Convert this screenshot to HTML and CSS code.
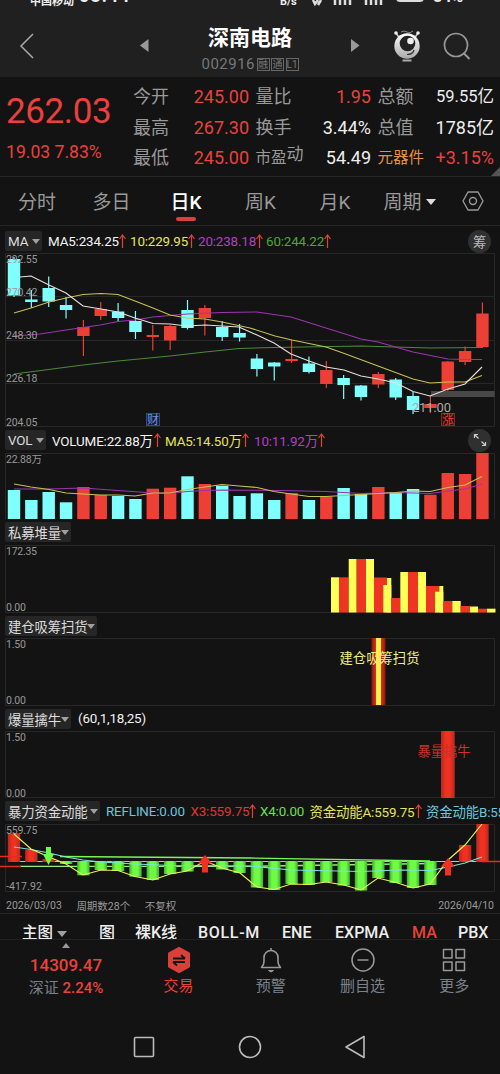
FILE: index.html
```
<!DOCTYPE html>
<html lang="zh-CN">
<head>
    <meta charset="UTF-8">
    <meta name="viewport" content="width=device-width, initial-scale=1.0">
    <title>深南电路 002916</title>
    <link rel="stylesheet" href="styles.css">
</head>
<body>

    <!-- Header -->
    <header class="header">
        <div class="status">
            <span class="carrier">中国移动</span>
            <span class="clock">08:44</span>
            <span class="net">B/s</span>
            <svg class="signals" width="80" height="8" viewBox="0 0 80 8">
                <path d="M5 0l2 4 3-4M13 0l-3 5M27 0v5M32 0v5M37 0v5M42 0v5M58 0v5M63 0v5M68 0v5M73 0v5" fill="none" stroke="#ddd" stroke-width="2.5"/>
            </svg>
            <span class="battery"></span>
            <span class="percent">84%</span>
        </div>
        <div class="title-bar">
            <svg class="back" width="16" height="28" viewBox="0 0 16 28"><path d="M14 2L2 14l12 12" fill="none" stroke="#aaa" stroke-width="1.5"/></svg>
            <svg class="prev" width="9" height="13" viewBox="0 0 9 13"><path d="M0 6.500L8.500 0v13z" fill="#999"/></svg>
            <div class="stock">
                <h1>深南电路</h1>
                <div class="code">002916<i>融</i><i>通</i><i>L1</i></div>
            </div>
            <svg class="next" width="9" height="13" viewBox="0 0 9 13"><path d="M8.500 6.500L0 0v13z" fill="#999"/></svg>
            <svg class="robot" width="28" height="34" viewBox="0 0 28 34">
                <defs>
                    <linearGradient id="ball" x1="0" y1="0" x2="0" y2="1"><stop offset="0" stop-color="#fff"/><stop offset="1" stop-color="#aaa"/></linearGradient>
                </defs>
                <path d="M3 4l4 6M25 4l-4 6" stroke="#ccc" stroke-width="1.500"/>
                <path d="M8 3q3-2 6 0t6-1" stroke="#888" fill="none"/>
                <circle cx="3" cy="4" r="1.800" fill="#eee"/><circle cx="25" cy="4" r="1.800" fill="#eee"/>
                <circle cx="14" cy="17" r="12.700" fill="url(#ball)"/>
                <circle cx="14.500" cy="14.500" r="7.800" fill="#222"/>
                <circle cx="17.500" cy="12" r="3.300" fill="#eee"/>
                <path d="M14 25.500q6 0 7-4.500" stroke="#333" fill="none" stroke-width="1.200"/>
                <path d="M9.500 31.500h9" stroke="#aaa" stroke-width="2"/>
            </svg>
            <svg class="search" width="28" height="28" viewBox="0 0 28 28"><circle cx="13" cy="13" r="11.500" fill="none" stroke="#999" stroke-width="1.700"/><path d="M20.500 21l6 6" stroke="#999" stroke-width="2"/></svg>
        </div>
    </header>

    <!-- Quote -->
    <section class="quote">
        <div class="now">
            <div class="price">262.03</div>
            <div class="change">19.03 7.83%</div>
        </div>
        <div class="stats">
            <span>今开</span><b class="red">245.00</b><span>量比</span><b class="red">1.95</b><span>总额</span><b class="amount">59.55亿</b>
            <span>最高</span><b class="red">267.30</b><span>换手</span><b>3.44%</b><span>总值</span><b>1785亿</b>
            <span>最低</span><b class="red">245.00</b><span class="pe">市盈<sup>动</sup></span><b>54.49</b><span class="sector">元器件</span><b class="red">+3.15%</b>
        </div>
        <svg class="corner" width="9" height="9" viewBox="0 0 9 9"><path d="M9 0v9H0z" fill="#555"/></svg>
    </section>

    <!-- Period tabs -->
    <nav class="tabs">
        <span>分时</span>
        <span>多日</span>
        <span class="active">日K</span>
        <span>周K</span>
        <span>月K</span>
        <span class="period">周期<i class="caret"></i></span>
        <svg width="22" height="20" viewBox="0 0 22 20"><path d="M6 1h10l5 9-5 9H6L1 10z" fill="none" stroke="#999" stroke-width="1.400" stroke-linejoin="round"/><circle cx="11" cy="10" r="3.500" fill="none" stroke="#999" stroke-width="1.400"/></svg>
    </nav>

    <!-- Arrow shared by the legends -->
    <svg class="symbols" width="0" height="0">
        <symbol id="arrow" viewBox="0 0 7 14"><path d="M3.500 14V1.500M.5 5l3-4 3 4" fill="none" stroke="#dd4438" stroke-width="1.200"/></symbol>
    </svg>

    <!-- Main chart -->
    <div class="legend ma-legend">
        <span class="tag">MA<i class="caret"></i></span>
        <span class="white">MA5:234.25<svg class="arrow"><use href="#arrow"/></svg></span>
        <span class="yellow">10:229.95<svg class="arrow"><use href="#arrow"/></svg></span>
        <span class="purple">20:238.18<svg class="arrow"><use href="#arrow"/></svg></span>
        <span class="green">60:244.22<svg class="arrow"><use href="#arrow"/></svg></span>
        <span class="round">筹</span>
    </div>
    <svg class="chart" width="500" height="174" viewBox="0 253 500 174">
        <path class="grid" d="M5.500 253.500h489v173H5.500zM5.500 296.500h489M5.500 340.500h489M5.500 383.500h489"/>
        <rect x="431" y="391" width="63.500" height="6" fill="#484848"/>
        <g id="candles"></g>
        <path class="line green-line" d="M14 374L83 365L118 361L170 356L205 352L239 348.500L274 347.500L361 346L430 348L482 347.500"/>
        <path class="line purple-line" d="M14 336L40 334L66 330L100 325L118 321.500L135 320L153 317L187 314L222 312.500L257 312L291 317L326 328L361 339L378 342L413 352L448 359L465 359.500H482"/>
        <path class="line yellow-line" d="M14 313L31 308L49 302L66 298L83 294.500L101 293.500L118 294.500L135 301L153 308L170 315L187 318L205 319L222 322L250 328L275 336L292 340L326 347L343 353L378 366L413 379L430 383L448 382L465 382L482 375.500"/>
        <path class="line white-line" d="M20 277L31 276L49 285L66 293L83 306L101 309L118 312L135 318L153 323.500L170 324L187 326L205 325L239 327L257 335L274 343L291 354L309 361L326 367L344 370L361 376L378 379L396 383L413 391.500L430 396L448 389L465 384L482 367"/>
        <text x="6" y="262.500" textLength="31.500">292.55</text>
        <text x="6" y="295.500" textLength="31.500">270.42</text>
        <text x="6" y="339" textLength="31.500">248.30</text>
        <text x="6" y="382" textLength="31.500">226.18</text>
        <text x="6" y="425.500" textLength="31.500">204.05</text>
        <text class="low" x="412" y="411.500" textLength="39">211.00</text>
        <rect class="mark blue" x="146.500" y="413.500" width="13" height="12"/>
        <text class="mark-text blue" x="147" y="424">财</text>
        <rect class="mark crimson" x="441.500" y="413.500" width="13" height="12"/>
        <text class="mark-text crimson" x="442" y="424">涨</text>
    </svg>

    <!-- Volume -->
    <div class="legend vol-legend">
        <span class="tag">VOL<i class="caret"></i></span>
        <span class="white">VOLUME:22.88万<svg class="arrow"><use href="#arrow"/></svg></span>
        <span class="yellow">MA5:14.50万<svg class="arrow"><use href="#arrow"/></svg></span>
        <span class="purple">10:11.92万<svg class="arrow"><use href="#arrow"/></svg></span>
        <span class="round"><svg width="14" height="14" viewBox="0 0 14 14"><path d="M5.500 5.500L1.500 1.500M1.500 5V1.500H5M8.500 8.500l4 4M12.500 9v3.500H9" fill="none" stroke="#ccc" stroke-width="1.200"/></svg></span>
    </div>
    <svg class="chart" width="500" height="66" viewBox="0 453 500 66">
        <path class="grid" d="M5.500 453.500h489v66H5.500z"/>
        <g id="volumes"></g>
        <path class="line purple-line" d="M14 489L49 489L83 488L118 490.500L153 493L170 493.500L187 491.500L205 490.500L222 490L280 490.500L326 491.500L361 493.500L396 492.500L430 493.500L448 491L465 489L482 484"/>
        <path class="line yellow-line" d="M14 484L31 487L49 489.500L66 493L83 494L101 495L118 495L135 496L153 493L170 493L187 489.500L205 487L222 484.500L239 486L257 487.500L274 491.500L291 494L309 496.500L326 496.500L361 494.500L396 492.500L413 491L430 491.500L448 487.500L465 485L482 476.500"/>
        <text x="6" y="462.500" textLength="36">22.88万</text>
    </svg>

    <!-- Private fund volume -->
    <div class="legend">
        <span class="tag">私募堆量<i class="caret"></i></span>
    </div>
    <svg class="chart" width="500" height="68" viewBox="0 545 500 68">
        <path class="grid" d="M5.500 545.500h489v67H5.500z"/>
        <g id="heap"></g>
        <text x="6" y="555" textLength="31">172.35</text>
        <text x="6" y="611" textLength="20">0.00</text>
    </svg>

    <!-- Accumulation signal -->
    <div class="legend short">
        <span class="tag">建仓吸筹扫货<i class="caret"></i></span>
    </div>
    <svg class="chart" width="500" height="68" viewBox="0 638 500 68">
        <defs>
            <linearGradient id="edge"><stop offset="0" stop-color="#8a1710"/><stop offset=".3" stop-color="#d0331c"/><stop offset=".7" stop-color="#d0331c"/><stop offset="1" stop-color="#8a1710"/></linearGradient>
            <linearGradient id="redbar"><stop offset="0" stop-color="#b42a22"/><stop offset=".35" stop-color="#f03020"/><stop offset=".65" stop-color="#f03020"/><stop offset="1" stop-color="#b42a22"/></linearGradient>
            <linearGradient id="greenbar"><stop offset="0" stop-color="#3fae2e"/><stop offset=".3" stop-color="#6dfb43"/><stop offset=".7" stop-color="#6dfb43"/><stop offset="1" stop-color="#3fae2e"/></linearGradient>
        </defs>
        <path class="grid" d="M5.500 638.500h489v67H5.500z"/>
        <rect x="371.500" y="638" width="14" height="67" fill="url(#edge)"/>
        <rect x="376" y="638" width="5" height="67" fill="#ffee4a"/>
        <text x="6" y="648" textLength="20">1.50</text>
        <text x="6" y="704" textLength="20">0.00</text>
        <text class="signal gather" x="339.500" y="663" textLength="80">建仓吸筹扫货</text>
    </svg>

    <!-- Burst signal -->
    <div class="legend short">
        <span class="tag">爆量擒牛<i class="caret"></i></span>
        <span class="white params">(60,1,18,25)</span>
    </div>
    <svg class="chart" width="500" height="67" viewBox="0 731 500 67">
        <path class="grid" d="M5.500 731.500h489v66H5.500z"/>
        <rect x="441" y="731" width="13.700" height="67" fill="url(#redbar)"/>
        <text class="signal burst" x="417.500" y="756" textLength="53">暴量擒牛</text>
        <text x="6" y="741" textLength="20">1.50</text>
        <text x="6" y="797" textLength="20">0.00</text>
    </svg>

    <!-- Capital momentum -->
    <div class="legend flow-legend">
        <span class="tag">暴力资金动能<i class="caret"></i></span>
        <span class="cyan">REFLINE:0.00</span>
        <span class="bright-red">X3:559.75<svg class="arrow"><use href="#arrow"/></svg></span>
        <span class="lime">X4:0.00</span>
        <span class="yellow">资金动能A:559.75<svg class="arrow"><use href="#arrow"/></svg></span>
        <span class="cyan">资金动能B:559.75</span>
    </div>
    <svg class="chart" width="500" height="68" viewBox="0 824 500 68">
        <path class="grid" d="M5.500 824.500h489v67H5.500z"/>
        <path d="M14 861.500H482" stroke="#c8b8d0" stroke-width="1.200"/>
        <path d="M20 866.300H250L430 863.500" stroke="#9be87c" stroke-width="1.300" fill="none"/>
        <g id="momentum"></g>
        <path d="M0 856.500H22M0 866.500H21M482 861.500H500" stroke="#e32a20" stroke-width="1.500"/>
        <path d="M60 856.500L250 858L430 861" stroke="#7bf557" stroke-width="1.300" fill="none"/>
        <path class="line" stroke="#79e4dc" d="M14 847L31 849.500L49 853L66 857L83 860L101 862L135 864L170 865.500L250 866L291 870L361 871.500L400 870L430 870.500L448 867L465 863L482 857"/>
        <path class="line" stroke="#f2f35a" d="M14 834L31 849L49 857L66 864L83 875L101 870L118 870.500L135 876.500L153 880L170 874L187 871L205 861L222 868L240 873L257 887L274 889.500L291 884L309 884.500L326 882L344 885L361 890L378 878L396 882.500L413 888L430 884L448 860L465 845L482 824"/>
        <path d="M46 847h5v7h3l-5.500 11-5.500-11h3z" fill="#6dfb43"/>
        <path d="M205 855l7 8.500h-4v9h-6v-9h-4z" fill="#f03020"/>
        <path d="M448 858l7 8.500h-4v9h-6v-9h-4z" fill="#f03020"/>
        <text x="6" y="833.500" textLength="31.500">559.75</text>
        <text x="6" y="890" textLength="36">-417.92</text>
    </svg>

    <div class="dates">
        <span>2026/03/03</span>
        <span>周期数28个</span>
        <span>不复权</span>
        <span class="end">2026/04/10</span>
    </div>

    <!-- Indicator bar -->
    <nav class="indicators">
        <span class="main">主图<i class="caret"></i></span>
        <span>图</span>
        <span>裸K线</span>
        <span class="boll">BOLL-M</span>
        <span>ENE</span>
        <span>EXPMA</span>
        <span class="red">MA</span>
        <span>PBX</span>
    </nav>

    <!-- Bottom actions -->
    <footer class="actions">
        <div class="index">
            <i class="up"></i>
            <div class="index-value">14309.47</div>
            <div class="index-change">深证 <b>2.24%</b></div>
        </div>
        <div class="action trade">
            <svg width="24" height="26" viewBox="0 0 24 26"><path d="M12 1l10 5.500v13L12 25 2 19.500v-13z" fill="#d9403a" stroke="#d9403a" stroke-width="2" stroke-linejoin="round"/><path d="M6 11.500h12M14 8l4 3.500M18 15H6M10 18.500L6 15" fill="none" stroke="#141414" stroke-width="1.800"/></svg>
            交易
        </div>
        <div class="action">
            <svg width="24" height="26" viewBox="0 0 24 26"><path d="M12 1v2M2.500 20.500c1.500-1.500 2.500-3.500 2.500-6v-4a7 7 0 0 1 14 0v4c0 2.500 1 4.500 2.500 6z" fill="none" stroke="#999" stroke-width="1.600" stroke-linejoin="round"/><path d="M9.500 23.500h5l-2.500 1.500z" fill="#999" stroke="#999"/></svg>
            预警
        </div>
        <div class="action">
            <svg width="24" height="26" viewBox="0 0 24 26"><circle cx="12" cy="13" r="11" fill="none" stroke="#999" stroke-width="1.500"/><path d="M6.500 13h11" stroke="#999" stroke-width="1.500"/></svg>
            删自选
        </div>
        <div class="action">
            <svg width="24" height="26" viewBox="0 0 24 26"><path d="M1.500 2.500h8.500v8.500H1.500zM14 2.500h8.500v8.500H14zM1.500 15h8.500v8.500H1.500zM14 15h8.500v8.500H14z" fill="none" stroke="#999" stroke-width="1.500" stroke-linejoin="round"/></svg>
            更多
        </div>
    </footer>

    <!-- System keys -->
    <div class="keys">
        <svg width="22" height="24" viewBox="0 0 22 24"><rect x="1.500" y="2.500" width="19" height="19" rx="1" fill="none" stroke="#bbb" stroke-width="1.600"/></svg>
        <svg width="24" height="24" viewBox="0 0 24 24"><circle cx="12" cy="12" r="10.500" fill="none" stroke="#bbb" stroke-width="1.600"/></svg>
        <svg width="22" height="24" viewBox="0 0 22 24"><path d="M20 1.500v21L2 12z" fill="none" stroke="#bbb" stroke-width="1.600" stroke-linejoin="round"/></svg>
    </div>

    <script src="script.js"></script>
</body>
</html>
```
FILE: styles.css
```
/* General styles */
* {
    box-sizing: border-box;
}
body {
    margin: 0;
    width: 500px;
    height: 1074px;
    overflow: hidden;
    background-color: #131313;
    color: #eee;
    font-family: Roboto, "Noto Sans CJK SC", sans-serif;
}
i {
    font-style: normal;
}
svg {
    display: block;
    flex-shrink: 0;
}
.red { color: #ea413c; }
.white { color: #f2f2f2; }
.yellow { color: #e6e45c; }
.purple { color: #b140c4; }
.green { color: #52a33c; }
.cyan { color: #6cc5dd; }
.lime { color: #6ce052; }
.bright-red { color: #e03530; }
.caret {
    display: inline-block;
    border: 4.5px solid transparent;
    border-top: 5px solid #a0a0a0;
    border-bottom: 0;
    vertical-align: middle;
}

/* Header */
.header {
    height: 77px;
    background-color: #202020;
}
.status {
    display: flex;
    align-items: flex-end;
    height: 8px;
    overflow: hidden;
    padding-left: 30px;
    font-size: 12px;
    font-weight: 700;
    line-height: 12px;
    white-space: nowrap;
}
.carrier { width: 49px; font-size: 11px; }
.clock { width: 201px; font-size: 18px; line-height: 24px; letter-spacing: 1px; }
.net { width: 28px; font-size: 11px; }
.signals { margin-right: 8px; }
.battery {
    width: 28px;
    height: 12px;
    margin-bottom: 6px;
    border: 2px solid #ddd;
    border-radius: 4px;
}
.percent { margin-left: 9px; font-size: 16px; line-height: 23px; }
.title-bar {
    display: flex;
    align-items: center;
    height: 69px;
    padding: 6px 0 0 19px;
}
.back { margin-right: 105px; }
.prev { margin-right: 47px; }
.stock {
    width: 108px;
    padding-top: 6px;
    text-align: center;
}
.stock h1 {
    margin: 0;
    font-size: 21px;
    font-weight: 700;
    line-height: 27px;
    color: #fff;
}
.code {
    display: flex;
    justify-content: center;
    align-items: center;
    margin-top: 4px;
    font-size: 15px;
    line-height: 16px;
    letter-spacing: 0.5px;
    color: #777;
}
.code i {
    width: 13px;
    height: 13px;
    margin-left: 1.5px;
    border: 1px solid #666;
    font-size: 10px;
    line-height: 11px;
    letter-spacing: 0;
}
.next { margin-left: 47px; }
.robot { margin-left: 33px; }
.search { margin-left: 22px; }

/* Quote */
.quote {
    position: relative;
    display: flex;
    height: 100px;
    border-bottom: 1px solid #262626;
}
.now {
    width: 133px;
    padding: 15px 0 0 6px;
    color: #ea413c;
}
.price {
    font-size: 35px;
    line-height: 40px;
    letter-spacing: -0.4px;
}
.change {
    margin-top: 11px;
    font-size: 17.6px;
    line-height: 18px;
}
.stats {
    display: grid;
    grid-template-columns: 38px 78px 45px 77px 48px 75px;
    grid-template-rows: repeat(3, 30.5px);
    align-items: center;
    padding: 5px 0 0;
    white-space: nowrap;
}
.stats span {
    font-size: 18px;
    line-height: 30px;
    color: #999;
}
.stats span:nth-child(6n + 3),
.stats span:nth-child(6n + 5) {
    padding-left: 6.5px;
}
.stats b {
    text-align: right;
    font-size: 18px;
    font-weight: 400;
    line-height: 30px;
}
.stats .amount { font-size: 16.5px; }
.stats .pe { font-size: 15.5px; }
.pe sup {
    font-size: 17px;
    line-height: 0;
    vertical-align: 3px;
}
.stats .sector {
    font-size: 15.5px;
    color: #e2923e;
}
.corner {
    position: absolute;
    right: 0;
    bottom: 0;
}

/* Tabs */
.tabs {
    display: grid;
    grid-template-columns: 74px 75px 74px 75px 74px 75px 30px;
    align-items: center;
    height: 49px;
    border-bottom: 1px solid #262626;
    font-size: 19px;
    color: #999;
}
.tabs span {
    padding-top: 3px;
    text-align: center;
    line-height: 30px;
    white-space: nowrap;
}
.tabs svg { margin: 0 0 0 15px; }
.tabs .active {
    position: relative;
    color: #fff;
    font-weight: 500;
}
.active::after {
    content: "";
    position: absolute;
    left: 27px;
    bottom: -3px;
    width: 20px;
    height: 4px;
    border-radius: 2px;
    background-color: #d9403a;
}
.period .caret {
    margin: -3px 0 0 4px;
    border-width: 6px 5px 0;
    border-top-color: #ddd;
}

/* Legends above every chart */
.symbols { position: absolute; }
.legend {
    display: flex;
    align-items: center;
    height: 26px;
    padding-left: 5px;
    overflow: hidden;
    font-size: 13.4px;
    letter-spacing: -0.15px;
    white-space: nowrap;
}
.ma-legend { height: 27px; padding-top: 3px; }
.short { height: 25px; }
.legend span {
    display: flex;
    flex-shrink: 0;
    align-items: center;
}
.arrow {
    width: 7px;
    height: 14px;
    margin-left: auto;
}
.legend .tag {
    height: 20px;
    margin-right: 6px;
    padding: 0 1px 0 3px;
    border-radius: 2px;
    background-color: #262626;
    color: #ddd;
}
.tag .caret { margin: 1px 1px 0 auto; }
.ma-legend .tag { width: 37px; }
.ma-legend .white { width: 78px; margin-right: 4px; }
.ma-legend .yellow, .ma-legend .purple, .ma-legend .green {
    width: 64.5px;
    margin-right: 3.5px;
}
.vol-legend .tag { width: 41px; }
.vol-legend .white { width: 109px; margin-right: 4px; }
.vol-legend .yellow { width: 84px; margin-right: 5px; }
.vol-legend .purple { width: 71px; }
.legend .params { margin-left: 1px; }
.flow-legend .tag { width: 95px; }
.flow-legend .cyan { width: 84.5px; }
.flow-legend .bright-red { width: 65px; margin-right: 4.5px; }
.flow-legend .lime { width: 49.5px; }
.flow-legend .yellow { width: 112.500px; margin-right: 4px; }
.legend .round {
    justify-content: center;
    width: 23px;
    height: 23px;
    margin: 0 9px 0 auto;
    border-radius: 50%;
    background-color: #303030;
    color: #bbb;
}

/* Charts */
.grid {
    fill: none;
    stroke: #272727;
}
.line {
    fill: none;
    stroke-width: 1.1;
}
.white-line { stroke: #e8e0dc; }
.yellow-line { stroke: #c8c052; }
.purple-line { stroke: #9b36ae; }
.green-line { stroke: #4b8a36; }
.chart text {
    font-size: 10.5px;
    fill: #999;
}
.chart .low {
    font-size: 13px;
    fill: #aaa;
}
.chart .signal { font-size: 13.3px; }
.chart .gather { fill: #f0f080; }
.chart .burst { fill: #c9302a; }
.mark { fill: #171b2c; }
.mark.blue { stroke: #2b4a94; }
.mark.crimson { fill: #25110f; stroke: #8f231d; }
.chart .mark-text { font-size: 12px; }
.chart .mark-text.blue { fill: #6c96ea; }
.chart .mark-text.crimson { fill: #e3413a; }
.rise { fill: #ec4037; }
.fall { fill: #80ffff; }

/* Date row */
.dates {
    display: flex;
    align-items: center;
    height: 22px;
    padding: 5px 6px 0;
    border-bottom: 1px solid #262626;
    font-size: 10.5px;
    color: #999;
}
.dates span { margin-right: 14.5px; }
.dates .end { margin: 0 0 0 auto; }

/* Indicator bar */
.indicators {
    display: grid;
    grid-template-columns: 77px 36px 63px 84px 53px 77px 46px 42px;
    height: 26px;
    padding: 7px 0 0 22px;
    overflow: hidden;
    border-bottom: 1px solid #222;
    font-size: 16px;
    font-weight: 500;
    line-height: 24px;
    white-space: nowrap;
}
.boll { letter-spacing: 0.7px; }
.main { font-size: 15.5px; }
.main .caret {
    margin-left: 4px;
    border-width: 6px 5px 0;
}

/* Bottom actions */
.actions {
    display: grid;
    grid-template-columns: 132px 93px 91.5px 92px 91.5px;
    height: 80px;
}
.index {
    padding-top: 3px;
    text-align: center;
    color: #ea413c;
}
.up {
    display: block;
    width: 0;
    margin: 0 auto;
    border: 4px solid transparent;
    border-top: 0;
    border-bottom: 5px solid #999;
}
.index-value {
    margin-top: 7px;
    font-size: 17px;
    font-weight: 500;
    line-height: 20px;
}
.index-change {
    margin-top: 2px;
    font-size: 15px;
    line-height: 22px;
    color: #7b818b;
}
.index-change b {
    font-weight: 500;
    color: #ea413c;
}
.action {
    display: flex;
    flex-direction: column;
    align-items: center;
    padding-top: 7px;
    font-size: 15px;
    line-height: 22px;
    color: #7b818b;
}
.action svg { margin-bottom: 2px; }
.trade { color: #ea413c; }

/* System keys */
.keys {
    display: grid;
    grid-template-columns: 105px 106px 24px;
    padding: 15px 0 0 132.5px;
}
```
FILE: script.js
```
const NS = "http://www.w3.org/2000/svg";
const STEP = 17.35;
const FIRST = 14;

// [rise, bodyTop, bodyBottom, high, low]
const candles = [
    [0, 259, 295.5, 257, 297], [0, 299.5, 302, 290, 308], [0, 288, 301.5, 276.5, 307], [0, 305, 310, 297, 318.5],
    [1, 327, 336, 320, 356], [1, 309, 316, 302, 320], [0, 311.5, 318, 303, 322], [0, 321, 332, 311, 339],
    [1, 335, 337, 325, 350.5], [1, 326, 340.5, 325, 350], [0, 310, 328, 300, 329.5], [1, 308, 318, 305, 335.5],
    [0, 327, 337, 321, 341], [0, 333, 337.5, 324, 341.5], [0, 358.5, 369, 354, 376.5], [0, 362.5, 366.5, 362, 380.5],
    [1, 359, 361, 340, 363], [0, 363.5, 372, 356.5, 373.5], [1, 370, 384, 361, 388], [0, 378, 385, 375, 399],
    [0, 385.5, 397, 385, 400.5], [1, 374, 384.5, 372, 388], [0, 379.5, 397.5, 378, 400], [0, 396, 410, 392, 414],
    [1, 404, 408, 396, 413], [1, 361.5, 390, 361, 391], [1, 351, 362, 346.5, 365], [1, 313.5, 347, 302.5, 348]
];

const volumeTops = [490, 500, 492, 502.3, 487, 495, 496, 499, 488.7, 487.7, 476.3, 484, 485.7, 496,
    493.3, 500, 493, 500, 496.7, 488, 494, 487, 492, 489, 494.7, 473, 474, 453];

// [x, width, top, yellow]
const heap = [
    [331, 8, 577.3, 1], [339, 9.7, 577.3, 0], [348.7, 8, 559, 1], [356.7, 9.3, 559, 0], [366, 8, 559, 1],
    [374, 13, 577.5, 0], [383.3, 8, 585, 1], [387, 4.3, 578, 1], [391.3, 9, 598, 0], [400.3, 7.7, 572, 1],
    [408, 10, 572, 0], [418, 8, 572, 1], [426, 13.3, 586, 0], [435, 8.3, 591.7, 1], [439.3, 4, 586, 1],
    [443.3, 9, 601, 0], [452.3, 8.4, 601, 1], [460.7, 9.3, 606, 0], [470, 8, 606.5, 1], [478, 9, 608.7, 0], [487, 8.5, 608.7, 1]
];

// [index, value edge], bars above the zero line are red
const momentum = [[0, 833.3], [1, 850], [2, 859], [3, 864], [4, 875.3], [5, 870], [6, 871], [7, 876.7], [8, 880],
    [9, 874], [10, 871.5], [12, 869.5], [13, 873], [14, 887.5], [15, 890], [16, 884], [17, 885], [18, 882],
    [19, 885.5], [20, 890.5], [21, 878], [22, 883], [23, 888], [24, 885], [26, 845], [27, 824]];

function rect(parent, x, y, width, height, attrs) {
    const el = document.createElementNS(NS, "rect");
    const all = Object.assign({ x: x, y: y, width: width, height: height }, attrs);
    for (const key in all) {
        el.setAttribute(key, all[key]);
    }
    document.getElementById(parent).appendChild(el);
}

candles.forEach((c, i) => {
    const x = FIRST + i * STEP;
    const cls = { class: c[0] ? "rise" : "fall" };
    rect("candles", x - 0.6, c[3], 1.2, c[4] - c[3], cls);
    rect("candles", x - 6.2, c[1], 12.4, c[2] - c[1], cls);
    rect("volumes", x - 6.2, volumeTops[i], 12.4, 519 - volumeTops[i], cls);
});

heap.forEach(h => rect("heap", h[0], h[2], h[1], 612.5 - h[2], { fill: h[3] ? "#ffff55" : "#ee3524" }));

momentum.forEach(m => {
    const up = m[1] < 861;
    rect("momentum", FIRST + m[0] * STEP - 6.2, Math.min(m[1], 861), 12.4, Math.abs(m[1] - 861) + (up ? 1 : 0),
        { fill: up ? "url(#redbar)" : "url(#greenbar)" });
});
```
